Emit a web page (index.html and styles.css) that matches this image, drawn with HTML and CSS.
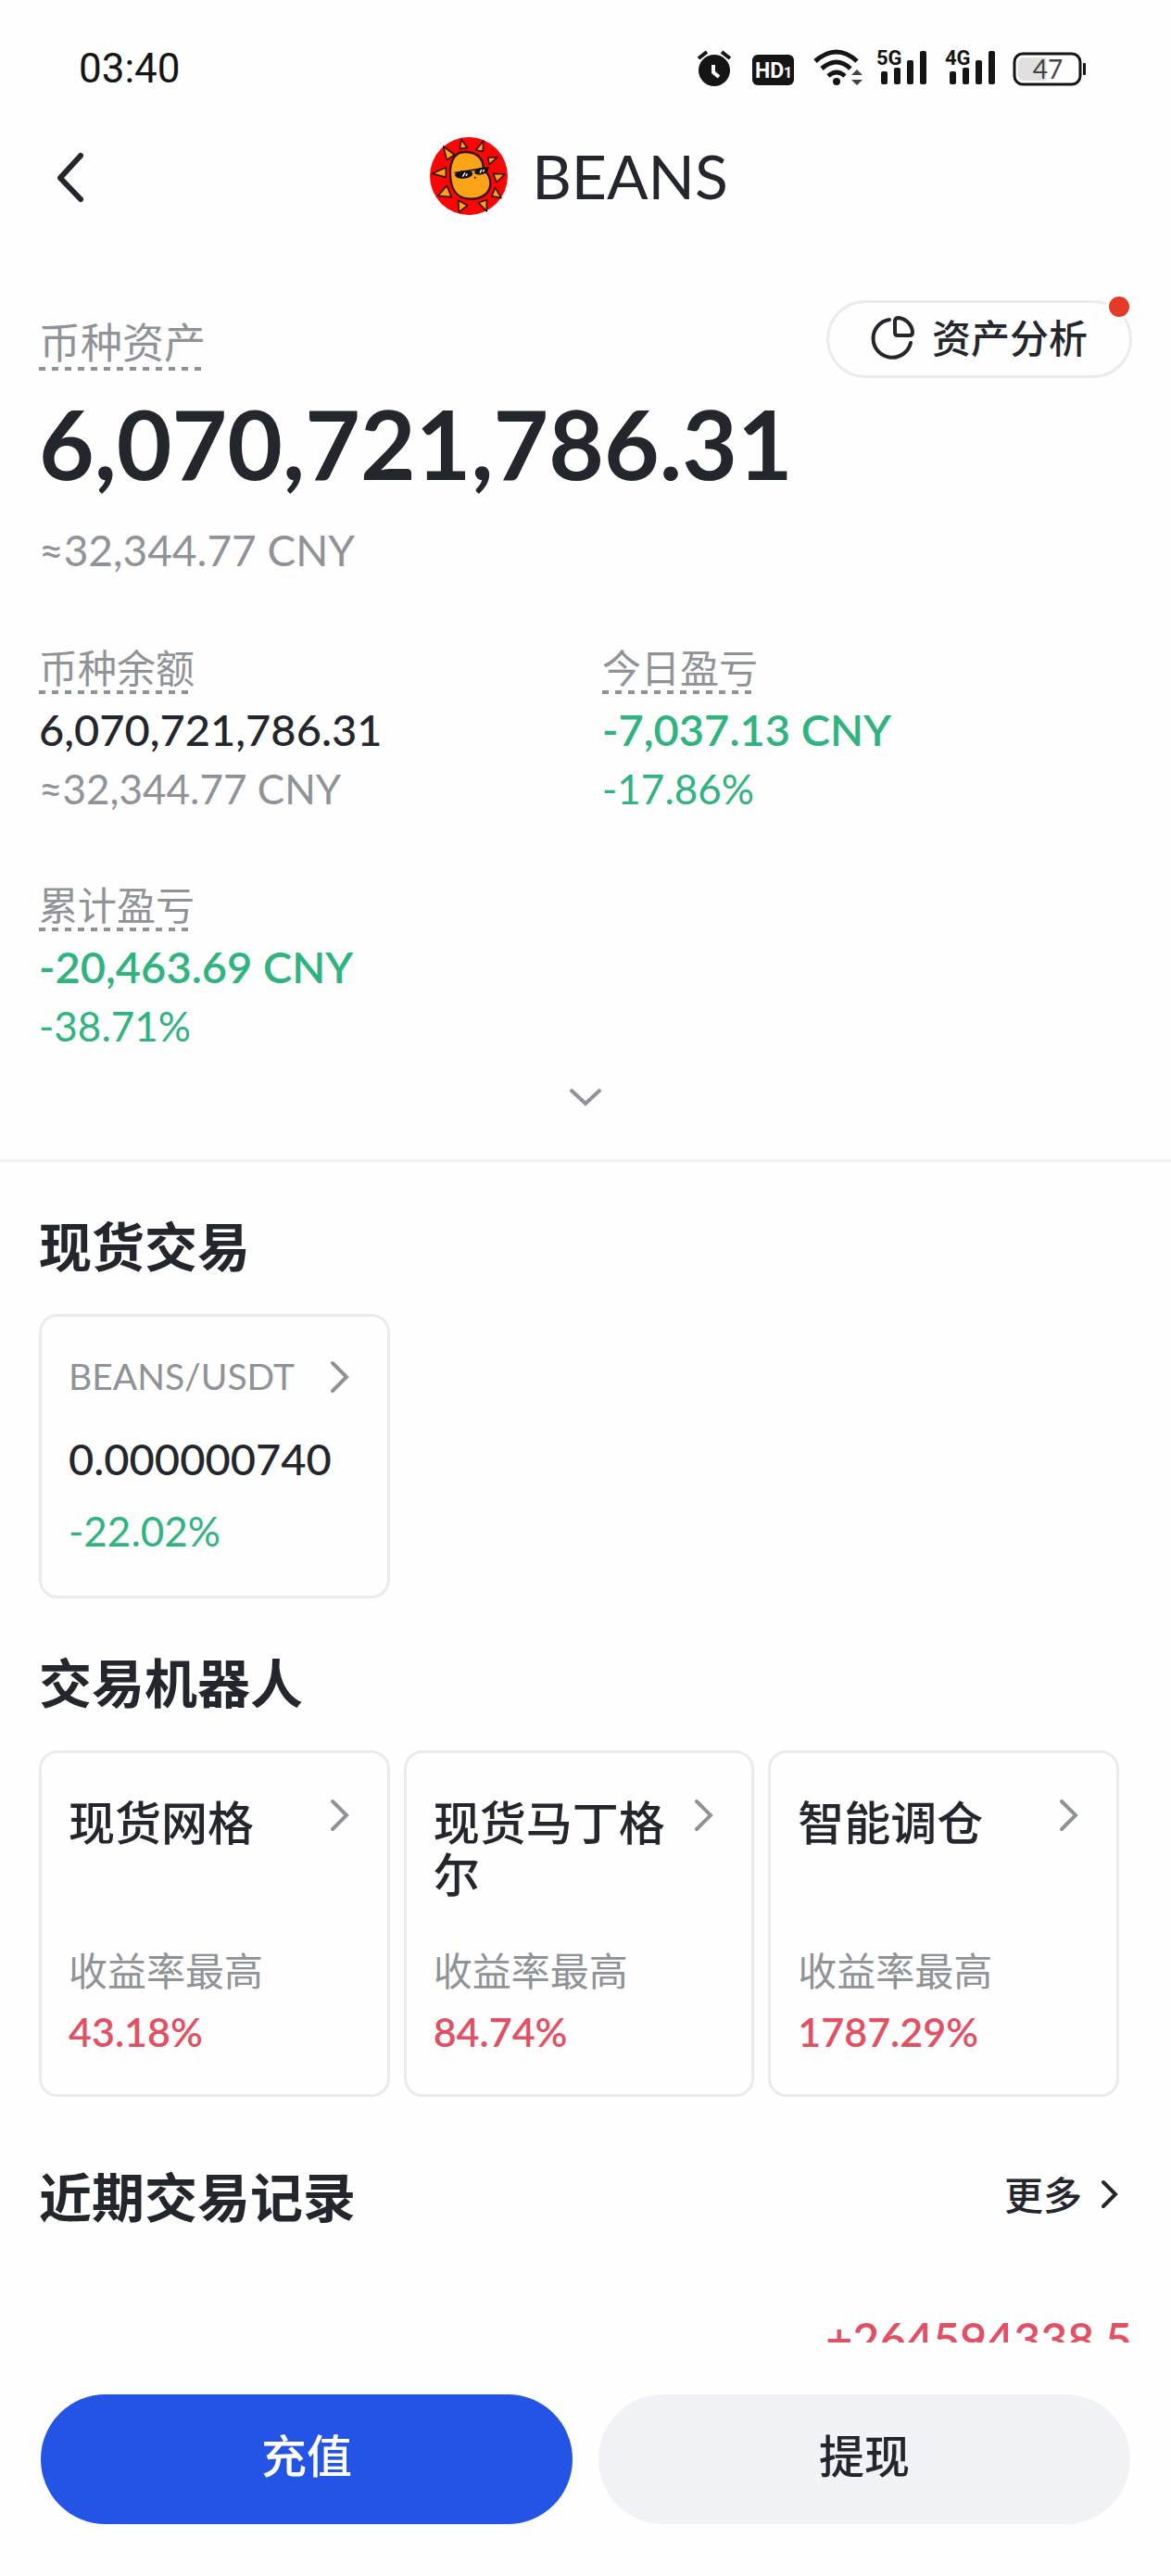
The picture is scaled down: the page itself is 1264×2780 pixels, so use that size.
FILE: index.html
```html
<!DOCTYPE html>
<html lang="zh-CN">
<head>
  <meta charset="UTF-8" />
  <meta name="viewport" content="width=device-width, initial-scale=1" />
  <title>BEANS</title>
  <link rel="stylesheet" href="styles.css">
</head>
<body>
  <div class="status-bar">
    <span class="time">03:40</span>
    <div class="status-icons">
      <svg width="44" height="40" viewBox="0 0 44 40">
        <circle cx="19" cy="22" r="17" fill="#151515"/>
        <path d="M2 9L11 2M36 9L27 2" stroke="#151515" stroke-width="4" fill="none"/>
        <path d="M18 16v8l6 5" stroke="#fff" stroke-width="4" fill="none"/>
      </svg>
      <svg width="48" height="40" viewBox="0 0 48 40">
        <rect x="0" y="5" width="45" height="33" rx="6" fill="#151515"/>
        <text x="3" y="30" class="icon-text hd">HD</text>
        <text x="34" y="30" class="icon-text hd-num">1</text>
      </svg>
      <svg width="53" height="40" viewBox="0 0 53 40">
        <g fill="none" stroke="#151515" stroke-width="5">
          <path d="M4 12Q27 -8 49 12"/>
          <path d="M11 20Q27 6 42 20"/>
          <path d="M18 28Q27 20 36 28"/>
        </g>
        <circle cx="27" cy="34" r="4" fill="#151515"/>
        <path d="M43 27l6-6 6 6zM43 32l6 6 6-6z" fill="#444"/>
      </svg>
      <svg width="58" height="40" viewBox="0 0 58 40">
        <text x="1" y="16" class="icon-text net">5G</text>
        <g fill="#151515">
          <rect x="6" y="23" width="7" height="14" rx="2"/>
          <rect x="20" y="19" width="7" height="18" rx="2"/>
          <rect x="34" y="11" width="7" height="26" rx="2"/>
          <rect x="48" y="1" width="7" height="36" rx="2"/>
        </g>
      </svg>
      <svg width="58" height="40" viewBox="0 0 58 40">
        <text x="1" y="16" class="icon-text net">4G</text>
        <g fill="#151515">
          <rect x="6" y="23" width="7" height="14" rx="2"/>
          <rect x="20" y="19" width="7" height="18" rx="2"/>
          <rect x="34" y="11" width="7" height="26" rx="2"/>
          <rect x="48" y="1" width="7" height="36" rx="2"/>
        </g>
      </svg>
      <svg width="80" height="40" viewBox="0 0 80 40">
        <rect x="2" y="4" width="71" height="33" rx="9" fill="none" stroke="#151515" stroke-width="3"/>
        <path d="M12 8h24v25H12a6 6 0 0 1-6-6V14a6 6 0 0 1 6-6z" fill="#e0e0e0"/>
        <rect x="76" y="14" width="3" height="13" rx="1" fill="#151515"/>
        <text x="38" y="31" class="battery-text">47</text>
      </svg>
    </div>
  </div>

  <header class="title-bar">
    <button class="back-btn" aria-label="返回">
      <svg width="40" height="60" viewBox="0 0 40 60"><path d="M27 8L5 32l22 23" /></svg>
    </button>
    <div class="coin">
      <svg class="coin-logo" viewBox="0 0 252 252">
        <circle cx="126" cy="126" r="126" fill="#fb0505"/>
        <g fill="#fba418" stroke="#3a0d05" stroke-width="5" stroke-linejoin="round">
          <path d="M102 8L121 34L97 38Z"/>
          <path d="M173 12L172 46L149 42Z"/>
          <path d="M44 30L80 57L55 74Z"/>
          <path d="M220 65L192 88L188 66Z"/>
          <path d="M8 118L52 98L52 130Z"/>
          <path d="M243 120L216 146L205 118Z"/>
          <path d="M26 190L55 157L70 194Z"/>
          <path d="M231 197L200 191L212 164Z"/>
          <path d="M94 243L122 221L92 205Z"/>
          <path d="M184 240L184 203L157 212Z"/>
          <path d="M112 48C80 48 65 80 66 117C66 165 85 199 130 200C170 201 196 180 196 150C196 130 186 114 172 105C176 72 155 48 112 48Z" stroke-width="7"/>
        </g>
        <path d="M80 116L192 98" stroke="#111" stroke-width="5"/>
        <ellipse cx="110" cy="121" rx="29" ry="13" fill="#111" transform="rotate(-6 110 121)"/>
        <ellipse cx="167" cy="110" rx="23" ry="11" fill="#111" transform="rotate(-12 167 110)"/>
        <path d="M106 128l8-13M117 126l4-8M162 116l6-11M172 113l4-8" stroke="#fff" stroke-width="4"/>
        <circle cx="146" cy="131" r="3" fill="#3a0d05"/>
      </svg>
      <h1>BEANS</h1>
    </div>
  </header>

  <main>
    <section class="summary">
      <div class="summary-head">
        <span class="label label-lg">币种资产</span>
        <button class="analysis-btn">
          <svg width="48" height="48" viewBox="0 0 48 48">
            <path d="M20 4A20.500 20.500 0 1 0 43 29"/>
            <path d="M26 5c0-2 2-3 4-3 8 1 14 7 15 15 0 3-1 4-3 4H29c-2 0-3-1-3-3z"/>
          </svg>
          资产分析
          <span class="dot"></span>
        </button>
      </div>
      <div class="total">6,070,721,786.31</div>
      <div class="total-cny">≈32,344.77 CNY</div>

      <div class="stats">
        <div class="stat">
          <span class="label">币种余额</span>
          <div class="value">6,070,721,786.31</div>
          <div class="sub">≈32,344.77 CNY</div>
        </div>
        <div class="stat">
          <span class="label">今日盈亏</span>
          <div class="value down">-7,037.13 CNY</div>
          <div class="sub down">-17.86%</div>
        </div>
        <div class="stat">
          <span class="label">累计盈亏</span>
          <div class="value down">-20,463.69 CNY</div>
          <div class="sub down">-38.71%</div>
        </div>
      </div>

      <button class="expand-btn" aria-label="展开">
        <svg width="40" height="40" viewBox="0 0 40 40"><path d="M5 13l15 14 15-14"/></svg>
      </button>
    </section>

    <section class="block">
      <h2>现货交易</h2>
      <div class="cards">
        <a class="card spot" href="#">
          <div class="card-head">
            <span class="pair">BEANS/USDT</span>
            <svg class="arrow" width="46" height="40" viewBox="0 0 46 40"><path d="M15 6l15 15-15 15"/></svg>
          </div>
          <div class="price">0.000000740</div>
          <div class="change">-22.02%</div>
        </a>
      </div>
    </section>

    <section class="block">
      <h2>交易机器人</h2>
      <div class="cards">
        <a class="card bot" href="#">
          <div class="card-head">
            <h3>现货网格</h3>
            <svg class="arrow" width="46" height="40" viewBox="0 0 46 40"><path d="M15 5l15 15-15 15"/></svg>
          </div>
          <div class="card-foot">
            <div class="rate-label">收益率最高</div>
            <div class="rate">43.18%</div>
          </div>
        </a>
        <a class="card bot" href="#">
          <div class="card-head">
            <h3>现货马丁格尔</h3>
            <svg class="arrow" width="46" height="40" viewBox="0 0 46 40"><path d="M15 5l15 15-15 15"/></svg>
          </div>
          <div class="card-foot">
            <div class="rate-label">收益率最高</div>
            <div class="rate">84.74%</div>
          </div>
        </a>
        <a class="card bot" href="#">
          <div class="card-head">
            <h3>智能调仓</h3>
            <svg class="arrow" width="46" height="40" viewBox="0 0 46 40"><path d="M15 5l15 15-15 15"/></svg>
          </div>
          <div class="card-foot">
            <div class="rate-label">收益率最高</div>
            <div class="rate">1787.29%</div>
          </div>
        </a>
      </div>
    </section>

    <section class="block records">
      <div class="records-head">
        <h2>近期交易记录</h2>
        <a class="more" href="#">更多
          <svg width="40" height="40" viewBox="0 0 40 40"><path d="M23 6l13 13-13 13"/></svg>
        </a>
      </div>
      <div class="amount">+264594338.5</div>
    </section>
  </main>

  <footer class="actions">
    <button class="btn btn-primary">充值</button>
    <button class="btn">提现</button>
  </footer>
</body>
</html>
```

FILE: styles.css
```css
:root {
  --text-color: #24262d;
  --muted-color: #8f9397;
  --down-color: #2fb380;
  --up-color: #e25064;
  --border-color: #ebebed;
  --primary-color: #2354e6;
  --side: 42px;
}

* {
  box-sizing: border-box;
}

body {
  margin: 0;
  height: 100vh;
  display: flex;
  flex-direction: column;
  background: #fefefe;
  color: var(--text-color);
  font-family: Lato, "Noto Sans CJK SC", sans-serif;
}

button {
  margin: 0;
  padding: 0;
  border: none;
  background: none;
  color: inherit;
  font-family: inherit;
  cursor: pointer;
}

a {
  color: inherit;
  text-decoration: none;
}

svg {
  display: block;
  flex: none;
  overflow: visible;
}

h1, h2, h3 {
  margin: 0;
}

/* status bar */
.status-bar {
  flex: none;
  height: 148px;
  padding: 0 91px 0 85px;
  display: flex;
  align-items: center;
  justify-content: space-between;
}

.time {
  font-family: Roboto, sans-serif;
  font-size: 44px;
  color: #151515;
}

.status-icons {
  display: flex;
  gap: 16px;
}

.icon-text {
  font-family: Roboto, sans-serif;
  font-weight: 700;
  fill: #151515;
}

.hd {
  font-size: 23px;
  fill: #fff;
}

.hd-num {
  font-size: 16px;
  fill: #fff;
}

.net {
  font-size: 22px;
}

.battery-text {
  font-family: Lato, sans-serif;
  font-size: 28px;
  fill: #444;
  text-anchor: middle;
}

/* title */
.title-bar {
  flex: none;
  height: 84px;
  padding: 0 60px;
  display: grid;
  grid-template-columns: 40px 1fr 40px;
  align-items: center;
}

.back-btn svg {
  fill: none;
  stroke: var(--text-color);
  stroke-width: 6;
  stroke-linecap: round;
  stroke-linejoin: round;
}

.coin {
  display: flex;
  align-items: center;
  justify-content: center;
  gap: 26px;
  padding-right: 14px;
}

.coin-logo {
  width: 84px;
  height: 84px;
}

h1 {
  font-size: 66px;
  font-weight: 400;
  line-height: 84px;
}

main {
  flex: 1;
  min-height: 0;
  overflow-y: auto;
  scrollbar-width: none;
}

/* summary */
.summary {
  padding: 92px var(--side) 47px;
  border-bottom: 3px solid #f2f2f3;
}

.summary-head {
  display: flex;
  align-items: flex-end;
  justify-content: space-between;
}

.label {
  display: inline-block;
  padding-bottom: 7px;
  font-size: 42px;
  line-height: 42px;
  color: var(--muted-color);
  vertical-align: top;
  background: repeating-linear-gradient(90deg, var(--muted-color) 0 7px, transparent 7px 14px) left bottom / 100% 4px no-repeat;
}

.label-lg {
  margin-bottom: 8px;
  font-size: 45px;
  line-height: 46px;
}

.analysis-btn {
  position: relative;
  display: flex;
  align-items: center;
  gap: 18px;
  height: 84px;
  padding: 0 45px 2px;
  border: 3px solid var(--border-color);
  border-radius: 42px;
  font-size: 42px;
  font-weight: 500;
  line-height: 48px;
}

.analysis-btn svg {
  fill: none;
  stroke: var(--text-color);
  stroke-width: 4;
  stroke-linecap: round;
}

.dot {
  position: absolute;
  top: -10px;
  right: -3px;
  width: 28px;
  height: 28px;
  border: 3px solid #fff;
  border-radius: 50%;
  background: #e53a26;
}

.total {
  margin-top: 10px;
  font-size: 103px;
  font-weight: 700;
  line-height: 120px;
}

.total-cny {
  margin-top: 28px;
  font-size: 46px;
  line-height: 56px;
  color: var(--muted-color);
}

.stats {
  margin-top: 78px;
  display: grid;
  grid-template-columns: 1fr 1fr;
  gap: 73px 36px;
}

.value {
  margin-top: 6px;
  font-size: 47px;
  font-weight: 500;
  line-height: 64px;
}

.sub {
  font-size: 44px;
  line-height: 64px;
  color: var(--muted-color);
}

.down {
  color: var(--down-color);
}

.value.down {
  font-weight: 600;
}

.expand-btn {
  display: block;
  margin: 25px auto 0;
}

.expand-btn svg,
.arrow {
  fill: none;
  stroke: var(--muted-color);
  stroke-width: 4;
  stroke-linecap: round;
}

/* blocks */
.block {
  padding: 56px var(--side) 0;
}

h2 {
  font-size: 57px;
  font-weight: 700;
  line-height: 70px;
}

.cards {
  margin: 38px 14px 0 0;
  display: grid;
  grid-template-columns: repeat(3, 1fr);
  gap: 15px;
}

.card {
  display: flex;
  flex-direction: column;
  border: 3px solid var(--border-color);
  border-radius: 20px;
  line-height: 56px;
}

.card-head {
  display: flex;
  justify-content: space-between;
}

.spot {
  padding: 36px 28px 42px 29px;
}

.spot .card-head {
  align-items: center;
}

.pair {
  font-size: 39px;
  color: var(--muted-color);
}

.price {
  margin-top: 33px;
  font-size: 47px;
  font-weight: 500;
}

.change {
  margin-top: 22px;
  font-size: 44px;
  color: var(--down-color);
}

.bot {
  padding: 47px 28px 39px 29px;
}

h3 {
  font-size: 50px;
  font-weight: 500;
}

.card-foot {
  margin-top: auto;
  padding-top: 48px;
}

.rate-label {
  font-size: 42px;
  color: var(--muted-color);
}

.rate {
  margin-top: 10px;
  font-size: 43px;
  font-weight: 600;
  color: var(--up-color);
}

/* records */
.records {
  padding-top: 73px;
}

.records-head {
  display: flex;
  align-items: center;
  justify-content: space-between;
  padding-right: 14px;
}

.more {
  display: flex;
  align-items: center;
  padding-bottom: 4px;
  font-size: 42px;
  font-weight: 500;
  line-height: 56px;
}

.more svg {
  fill: none;
  stroke: var(--text-color);
  stroke-width: 4;
  stroke-linecap: round;
}

.amount {
  margin-top: 88px;
  font-size: 50px;
  font-weight: 600;
  line-height: 60px;
  text-align: right;
  color: var(--up-color);
}

/* bottom actions */
.actions {
  flex: none;
  display: flex;
  gap: 28px;
  padding: 56px 44px;
}

.btn {
  flex: 1;
  height: 140px;
  padding-bottom: 8px;
  border-radius: 70px;
  background: #f0f2f5;
  font-size: 49px;
  font-weight: 500;
  line-height: 56px;
}

.btn-primary {
  background: var(--primary-color);
  color: #fff;
}
```
